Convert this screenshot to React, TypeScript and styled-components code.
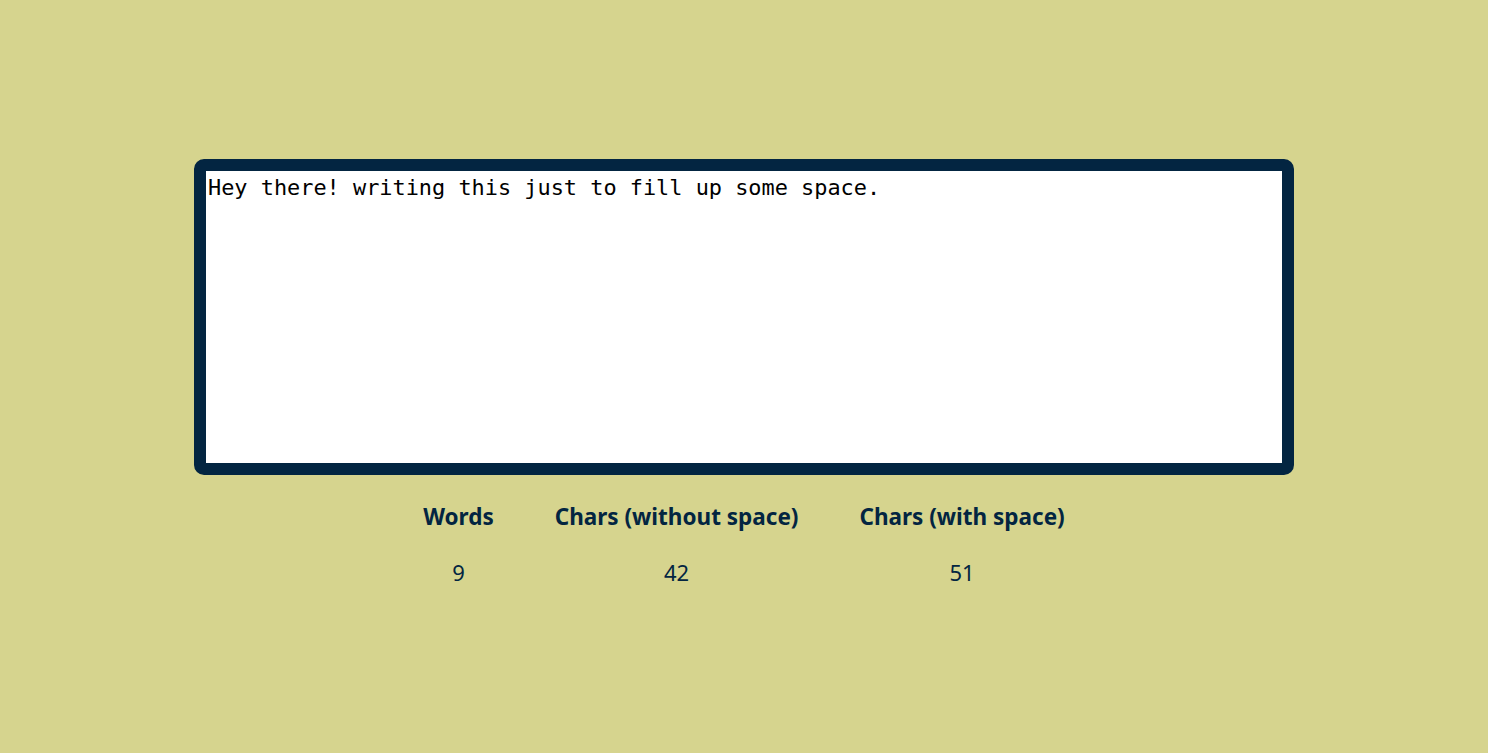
import React, { useState } from "react";
import styled, { createGlobalStyle } from "styled-components";

const Global = createGlobalStyle`
  html, body { margin: 0; padding: 0; background: #d6d48e; }
  body { font-family: "Noto Sans", "Open Sans", sans-serif; }
`;

const Page = styled.main`
  min-height: 753px;
  display: flex;
  flex-direction: column;
  align-items: center;
  padding-top: 159px;
  box-sizing: border-box;
`;

const Editor = styled.textarea`
  width: 1100px;
  height: 316px;
  box-sizing: border-box;
  border: 12px solid #032541;
  border-radius: 10px;
  padding: 4px 2px 2px;
  margin: 0;
  resize: none;
  outline: none;
  background: #ffffff;
  color: #000;
  font-family: "DejaVu Sans Mono", "Liberation Mono", monospace;
  font-size: 21.9px;
  line-height: 1.15;
  display: block;
`;

const Stats = styled.section`
  display: flex;
  gap: 61px;
  margin-top: 26px;
  color: #032541;
`;

const Stat = styled.div`
  display: flex;
  flex-direction: column;
  align-items: center;
  gap: 23px;
`;

const Label = styled.h3`
  margin: 0;
  font-size: 22.5px;
  font-weight: 700;
  line-height: 32px;
`;

const Value = styled.span`
  font-size: 22px;
  font-weight: 400;
  line-height: 32px;
`;

export default function App() {
  const [text, setText] = useState("Hey there! writing this just to fill up some space.");
  const words = text.split(" ").length - 1;
  const noSpace = text.replace(/\s/g, "").length;
  return (
    <>
      <Global />
      <Page>
        <Editor value={text} onChange={(e) => setText(e.target.value)} spellCheck={false} />
        <Stats>
          <Stat>
            <Label>Words</Label>
            <Value>{words}</Value>
          </Stat>
          <Stat>
            <Label>Chars (without space)</Label>
            <Value>{noSpace}</Value>
          </Stat>
          <Stat>
            <Label>Chars (with space)</Label>
            <Value>{text.length}</Value>
          </Stat>
        </Stats>
      </Page>
    </>
  );
}
